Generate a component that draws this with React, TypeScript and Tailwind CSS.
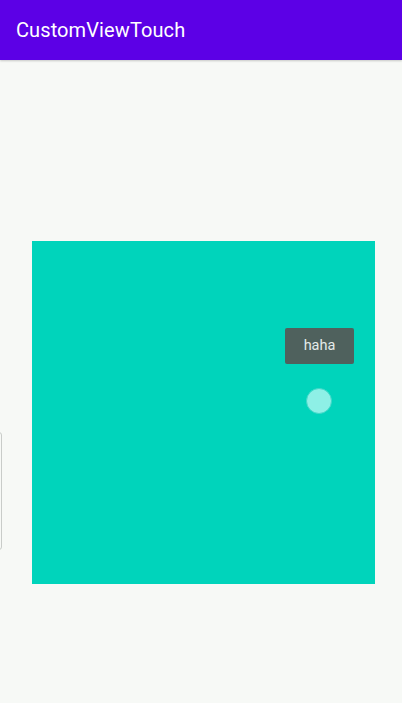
export default function App() {
  return (
    <div className="relative w-[402px] h-[703px] overflow-hidden bg-[#f7f9f6]" style={{ fontFamily: 'Roboto, "Noto Sans", sans-serif' }}>
      <div className="h-[60px] bg-[#5c00e6] flex items-center pl-4 shadow-[0_1px_2px_rgba(0,0,0,0.2)]">
        <span className="text-white text-[20px] tracking-[0.1px]">CustomViewTouch</span>
      </div>
      <div className="pt-[181px] pl-8">
        <div className="relative w-[343px] h-[343px] bg-[#00d4bb]">
          <div className="absolute left-[253px] top-[87px] w-[69px] h-[36px] bg-[#4f615d] rounded-[2px] flex items-center justify-center">
            <span className="text-[#e4ebe9] text-[14.5px]">haha</span>
          </div>
          <div className="absolute left-[274px] top-[147px] w-[26px] h-[26px] rounded-full bg-[#8ef0e6] border border-[#3fd8c8]" />
        </div>
      </div>
      <div className="absolute left-[-10px] top-[432px] w-[12px] h-[118px] rounded-[3px] border border-[#c9ccc9] bg-[#f7f9f6]" />
    </div>
  );
}
